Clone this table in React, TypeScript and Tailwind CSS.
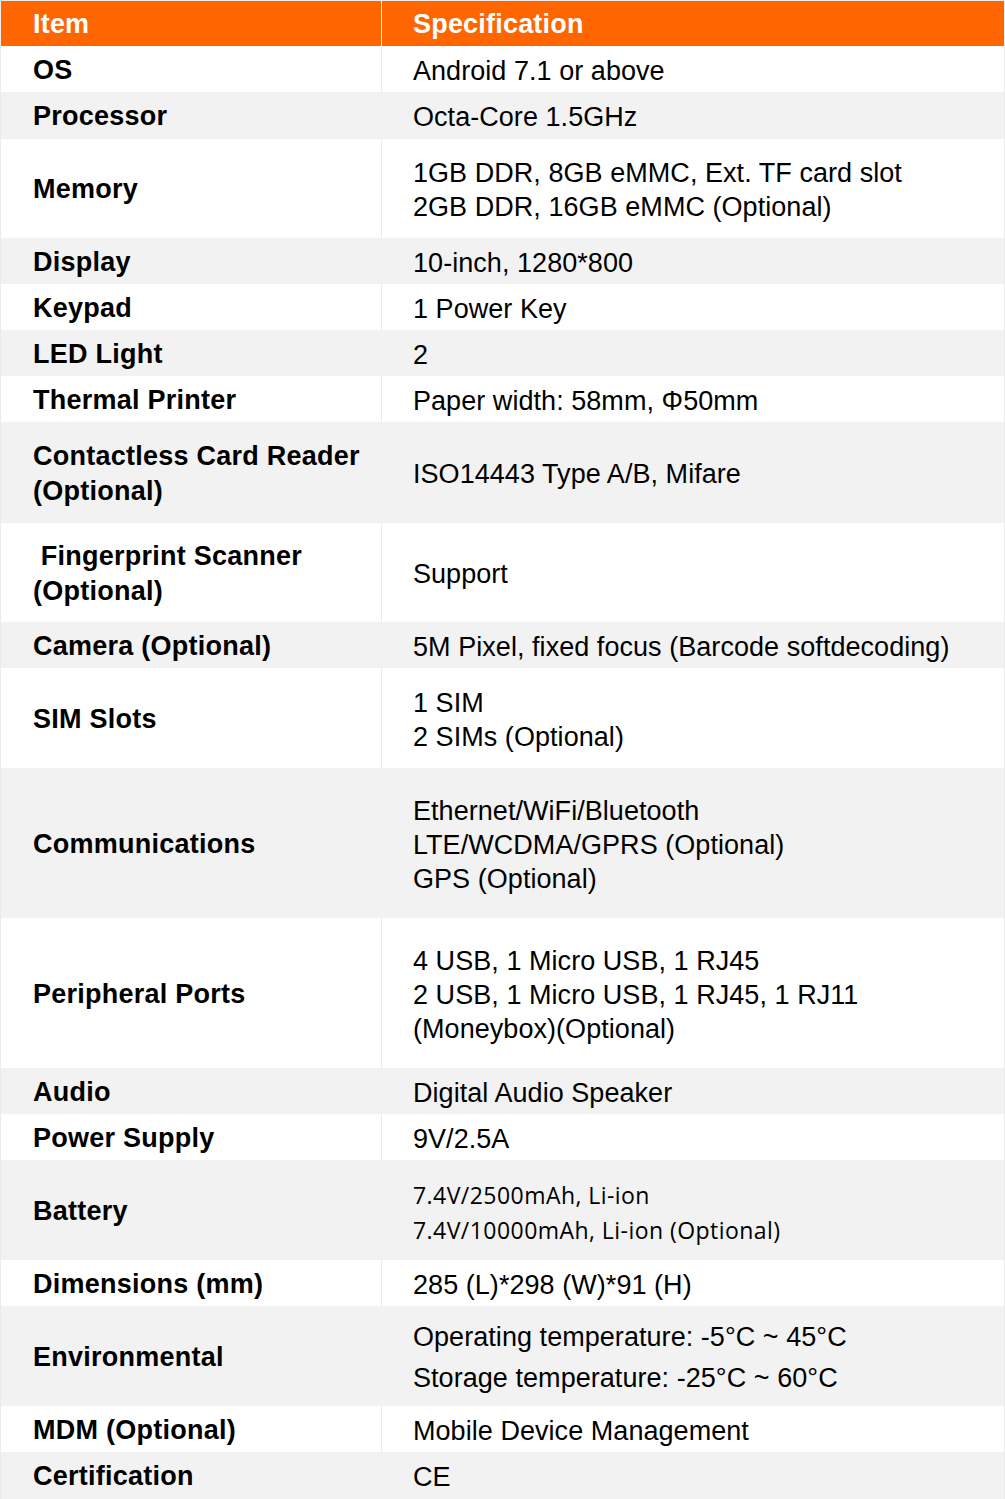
import React from "react";

type Row = {
  label: string[];
  value: string[];
  h: string;
  gray: boolean;
  valueClass?: string;
};

const rows: Row[] = [
  { label: ["OS"], value: ["Android 7.1 or above"], h: "h-[46px]", gray: false },
  { label: ["Processor"], value: ["Octa-Core 1.5GHz"], h: "h-[47px]", gray: true },
  {
    label: ["Memory"],
    value: ["1GB DDR, 8GB eMMC, Ext. TF card slot", "2GB DDR, 16GB eMMC (Optional)"],
    h: "h-[99px]",
    gray: false,
  },
  { label: ["Display"], value: ["10-inch, 1280*800"], h: "h-[46px]", gray: true },
  { label: ["Keypad"], value: ["1 Power Key"], h: "h-[46px]", gray: false },
  { label: ["LED Light"], value: ["2"], h: "h-[46px]", gray: true },
  { label: ["Thermal Printer"], value: ["Paper width: 58mm, Φ50mm"], h: "h-[46px]", gray: false },
  {
    label: ["Contactless Card Reader", "(Optional)"],
    value: ["ISO14443 Type A/B, Mifare"],
    h: "h-[101px]",
    gray: true,
  },
  {
    label: ["\u00a0Fingerprint Scanner", "(Optional)"],
    value: ["Support"],
    h: "h-[99px]",
    gray: false,
  },
  {
    label: ["Camera (Optional)"],
    value: ["5M Pixel, fixed focus (Barcode softdecoding)"],
    h: "h-[46px]",
    gray: true,
  },
  { label: ["SIM Slots"], value: ["1 SIM", "2 SIMs (Optional)"], h: "h-[100px]", gray: false },
  {
    label: ["Communications"],
    value: ["Ethernet/WiFi/Bluetooth", "LTE/WCDMA/GPRS (Optional)", "GPS (Optional)"],
    h: "h-[150px]",
    gray: true,
  },
  {
    label: ["Peripheral Ports"],
    value: ["4 USB, 1 Micro USB, 1 RJ45", "2 USB, 1 Micro USB, 1 RJ45, 1 RJ11", "(Moneybox)(Optional)"],
    h: "h-[150px]",
    gray: false,
  },
  { label: ["Audio"], value: ["Digital Audio Speaker"], h: "h-[46px]", gray: true },
  { label: ["Power Supply"], value: ["9V/2.5A"], h: "h-[46px]", gray: false },
  {
    label: ["Battery"],
    value: ["7.4V/2500mAh, Li-ion", "7.4V/10000mAh, Li-ion (Optional)"],
    h: "h-[100px]",
    gray: true,
    valueClass: "font-['Open_Sans',sans-serif] text-[23px] leading-[35px] tracking-[0.45px] pt-[6px]",
  },
  { label: ["Dimensions (mm)"], value: ["285 (L)*298 (W)*91 (H)"], h: "h-[46px]", gray: false },
  {
    label: ["Environmental"],
    value: ["Operating temperature: -5°C ~ 45°C", "Storage temperature: -25°C ~ 60°C"],
    h: "h-[100px]",
    gray: true,
    valueClass: "leading-[41px]",
  },
  { label: ["MDM (Optional)"], value: ["Mobile Device Management"], h: "h-[46px]", gray: false },
  { label: ["Certification"], value: ["CE"], h: "h-[47px]", gray: true },
];

export default function App() {
  return (
    <div className="w-[1005px] h-[1499px] overflow-hidden bg-white border-t border-x border-[#ececec] font-['Liberation_Sans',Arial,sans-serif] text-black text-[27px]">
      {/* header */}
      <div className="flex h-[45px] bg-[#ff6600] text-white font-bold tracking-[0.2px]">
        <div className="w-[381px] shrink-0 flex items-center pl-8 pt-[2px] border-r border-white">Item</div>
        <div className="flex-1 flex items-center pl-[31px] pt-[2px]">Specification</div>
      </div>

      {rows.map((row, i) => (
        <div key={i} className={`flex ${row.h} ${row.gray ? "bg-[#f2f2f2]" : "bg-white"}`}>
          <div
            className={`w-[381px] shrink-0 flex flex-col justify-center pl-8 pt-[2px] font-bold leading-[35px] tracking-[0.25px] border-r ${
              row.gray ? "border-[#f2f2f2]" : "border-[#ececec]"
            }`}
          >
            {row.label.map((l, j) => (
              <div key={j} className="whitespace-pre">
                {l}
              </div>
            ))}
          </div>
          <div
            className={`flex-1 flex flex-col justify-center pl-[31px] pt-[3px] leading-[34px] tracking-[0.05px] ${
              row.valueClass ?? ""
            }`}
          >
            {row.value.map((v, j) => (
              <div key={j} className="whitespace-nowrap">
                {v}
              </div>
            ))}
          </div>
        </div>
      ))}
    </div>
  );
}
